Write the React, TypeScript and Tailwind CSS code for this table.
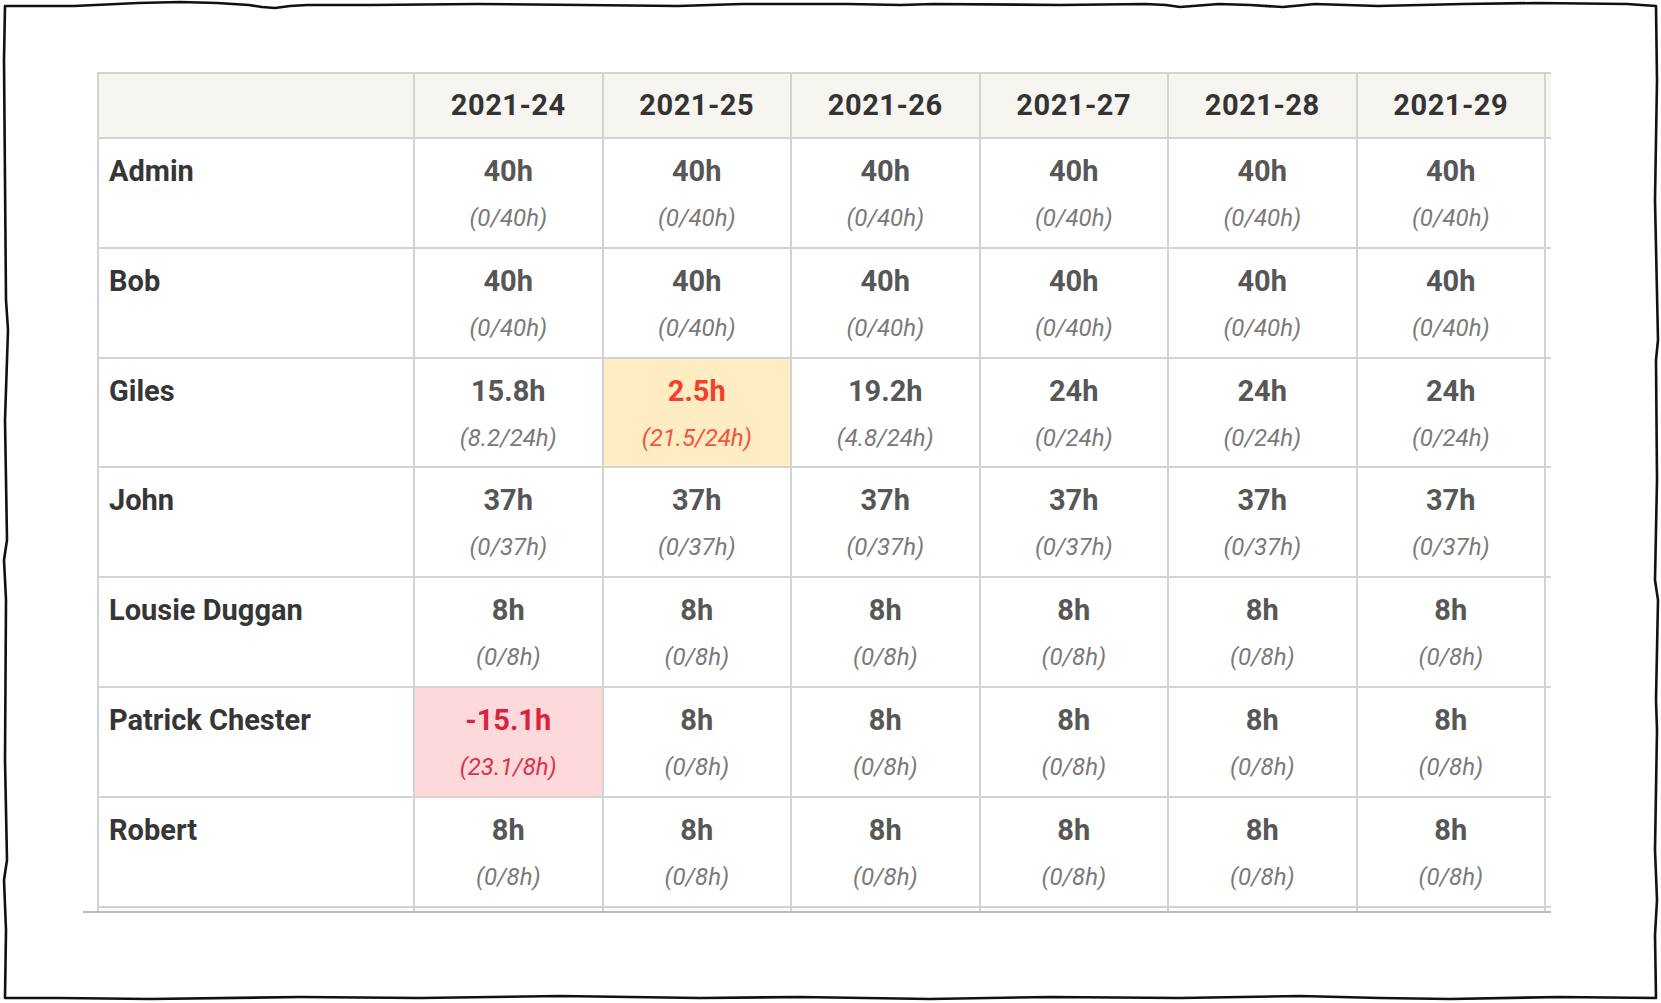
const weeks = ['2021-24', '2021-25', '2021-26', '2021-27', '2021-28', '2021-29']

type Cell = { left: string; detail: string; tone?: 'warn' | 'over' }

const same = (left: string, detail: string): Cell[] => weeks.map(() => ({ left, detail }))

const rows: { name: string; cells: Cell[] }[] = [
  { name: 'Admin', cells: same('40h', '(0/40h)') },
  { name: 'Bob', cells: same('40h', '(0/40h)') },
  {
    name: 'Giles',
    cells: [
      { left: '15.8h', detail: '(8.2/24h)' },
      { left: '2.5h', detail: '(21.5/24h)', tone: 'warn' },
      { left: '19.2h', detail: '(4.8/24h)' },
      { left: '24h', detail: '(0/24h)' },
      { left: '24h', detail: '(0/24h)' },
      { left: '24h', detail: '(0/24h)' },
    ],
  },
  { name: 'John', cells: same('37h', '(0/37h)') },
  { name: 'Lousie Duggan', cells: same('8h', '(0/8h)') },
  {
    name: 'Patrick Chester',
    cells: [{ left: '-15.1h', detail: '(23.1/8h)', tone: 'over' }, ...same('8h', '(0/8h)').slice(1)],
  },
  { name: 'Robert', cells: same('8h', '(0/8h)') },
]

// hand drawn frame round the whole shot
const frame =
  'M5,6 L74,6 L138,3 L180,2 L217,3 L249,5 L262,7 L275,8 L290,6 L307,5 L371,5 L477,4 L583,5 L678,6 L742,4 L848,4 L901,5 L933,4 L1060,5 L1145,4 L1166,5 L1180,7 L1193,6 L1219,4 L1250,5 L1283,7 L1315,4 L1378,6 L1463,4 L1537,3 L1627,4 L1656,6 ' +
  'L1657,80 L1655,200 L1658,340 L1656,360 L1657,480 L1655,580 L1658,600 L1656,700 L1657,730 L1655,850 L1657,900 L1655,935 L1656,998 ' +
  'L1560,997 L1450,999 L1380,998 L1300,996 L1180,998 L1050,997 L930,999 L800,997 L700,998 L560,996 L420,998 L300,997 L150,999 L60,998 L5,998 ' +
  'L6,930 L4,880 L7,860 L5,760 L6,600 L4,560 L7,540 L5,420 L8,330 L6,300 L5,180 L4,60 Z'

const line = 'border-r-2 border-b-2 border-[#d3d3d3]'

function ValueCell({ cell }: { cell: Cell }) {
  const bg = cell.tone === 'warn' ? 'bg-[#ffecc2]' : cell.tone === 'over' ? 'bg-[#fdd9db]' : 'bg-white'
  const main =
    cell.tone === 'warn' ? 'text-[#f2402a]' : cell.tone === 'over' ? 'text-[#d9253b]' : 'text-[#575757]'
  const sub =
    cell.tone === 'warn' ? 'text-[#f2543e]' : cell.tone === 'over' ? 'text-[#d93349]' : 'text-[#7a7a7a]'
  return (
    <div className={`flex flex-col items-center pt-[14px] ${line} ${bg}`}>
      <div className={`text-[29px] font-bold leading-[36px] ${main}`}>{cell.left}</div>
      <div className={`mt-[14px] text-[24px] italic leading-[30px] ${sub}`}>{cell.detail}</div>
    </div>
  )
}

export default function App() {
  return (
    <div className="relative h-[1003px] w-[1661px] overflow-hidden bg-white font-['Roboto',sans-serif]">
      <svg className="pointer-events-none absolute inset-0" width="1661" height="1003">
        <path d={frame} fill="none" stroke="#111" strokeWidth="2.6" strokeLinejoin="round" />
      </svg>

      <div className="pl-[83px] pt-[72px]">
        {/* scroll box: next week column and next row run on past its edges */}
        <div className="h-[841px] w-[1468px] overflow-hidden border-b-2 border-[#b9b9b9] pl-[14px]">
          <div className="grid w-max grid-cols-[316px_repeat(7,188.5px)] grid-rows-[65px_repeat(8,109.8px)] border-t-2 border-l-2 border-[#d3d3d3]">
            <div className={`${line} bg-[#f7f5f0]`} />
            {weeks.map((w) => (
              <div
                key={w}
                className={`flex items-center justify-center bg-[#f7f5f0] text-[29px] font-bold tracking-[0.5px] text-[#333] ${line}`}
              >
                {w}
              </div>
            ))}
            <div className={`${line} bg-[#f7f5f0]`} />

            {rows.map((r) => (
              <>
                <div
                  key={r.name}
                  className={`pl-[10px] pt-[14px] text-[29px] font-bold leading-[36px] text-[#363636] ${line}`}
                >
                  {r.name}
                </div>
                {r.cells.map((c, i) => (
                  <ValueCell key={r.name + i} cell={c} />
                ))}
                <div className={line} />
              </>
            ))}

            {Array.from({ length: 8 }).map((_, i) => (
              <div key={'tail' + i} className={line} />
            ))}
          </div>
        </div>
      </div>
    </div>
  )
}
